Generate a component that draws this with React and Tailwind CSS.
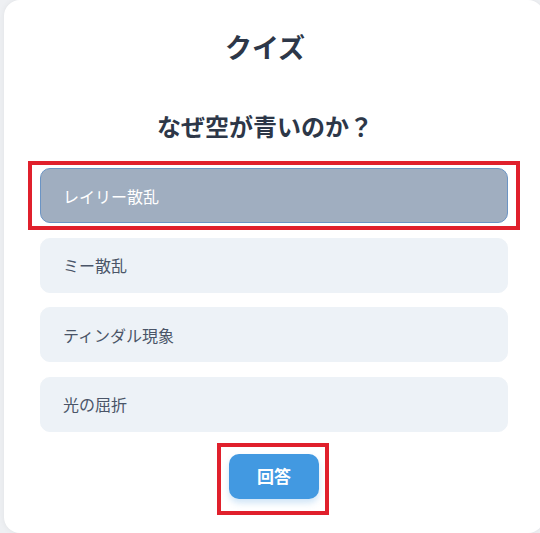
import React, { useState } from "react";

const options = ["レイリー散乱", "ミー散乱", "ティンダル現象", "光の屈折"];

const App = () => {
  const [selected, setSelected] = useState(0);

  return (
    <div
      className="min-h-screen overflow-hidden bg-[#eef0f3] pl-[4px]"
      style={{ fontFamily: '"Noto Sans CJK JP", "Noto Sans", sans-serif' }}
    >
      <div className="w-[540px] h-[533px] bg-white rounded-2xl shadow-[0_0_6px_rgba(0,0,0,0.06)] px-[36px] pt-[28px]">
        {/* Title */}
        <h1 className="pr-[18px] text-center text-[27px] leading-[38px] font-bold text-[#2d3748]">クイズ</h1>

        {/* Question */}
        <h2 className="pr-[18px] mt-[43px] text-center text-[24px] leading-[34px] font-bold text-[#2d3748]">
          なぜ空が青いのか？
        </h2>

        {/* Options */}
        <div className="mt-[25px] flex flex-col gap-[14.5px]">
          {options.map((opt, i) => (
            <div key={opt} className="relative">
              <button
                onClick={() => setSelected(i)}
                className={
                  i === selected
                    ? "w-full h-[55px] rounded-[10px] border border-[#6b94c4] bg-[#a0aec0] text-white text-left pl-[22px] text-[16px]"
                    : "w-full h-[55px] rounded-[10px] border border-[#edf2f7] bg-[#edf2f7] text-[#4a5568] text-left pl-[22px] text-[16px]"
                }
              >
                {opt}
              </button>
              {i === selected && (
                <span className="pointer-events-none absolute -left-[12px] -right-[12px] -top-[7px] -bottom-[7px] border-4 border-[#e0202c]" />
              )}
            </div>
          ))}
        </div>

        {/* Submit */}
        <div className="mt-[22px] flex justify-center">
          <div className="relative">
            <button className="w-[90px] h-[45px] rounded-[10px] bg-[#4299e1] text-white text-[17px] font-bold shadow-[0_4px_6px_rgba(66,153,225,0.25)]">
              回答
            </button>
            <span className="pointer-events-none absolute -left-[12px] -right-[10px] -top-[11px] -bottom-[16px] border-4 border-[#e0202c]" />
          </div>
        </div>
      </div>
    </div>
  );
};

export default App;
